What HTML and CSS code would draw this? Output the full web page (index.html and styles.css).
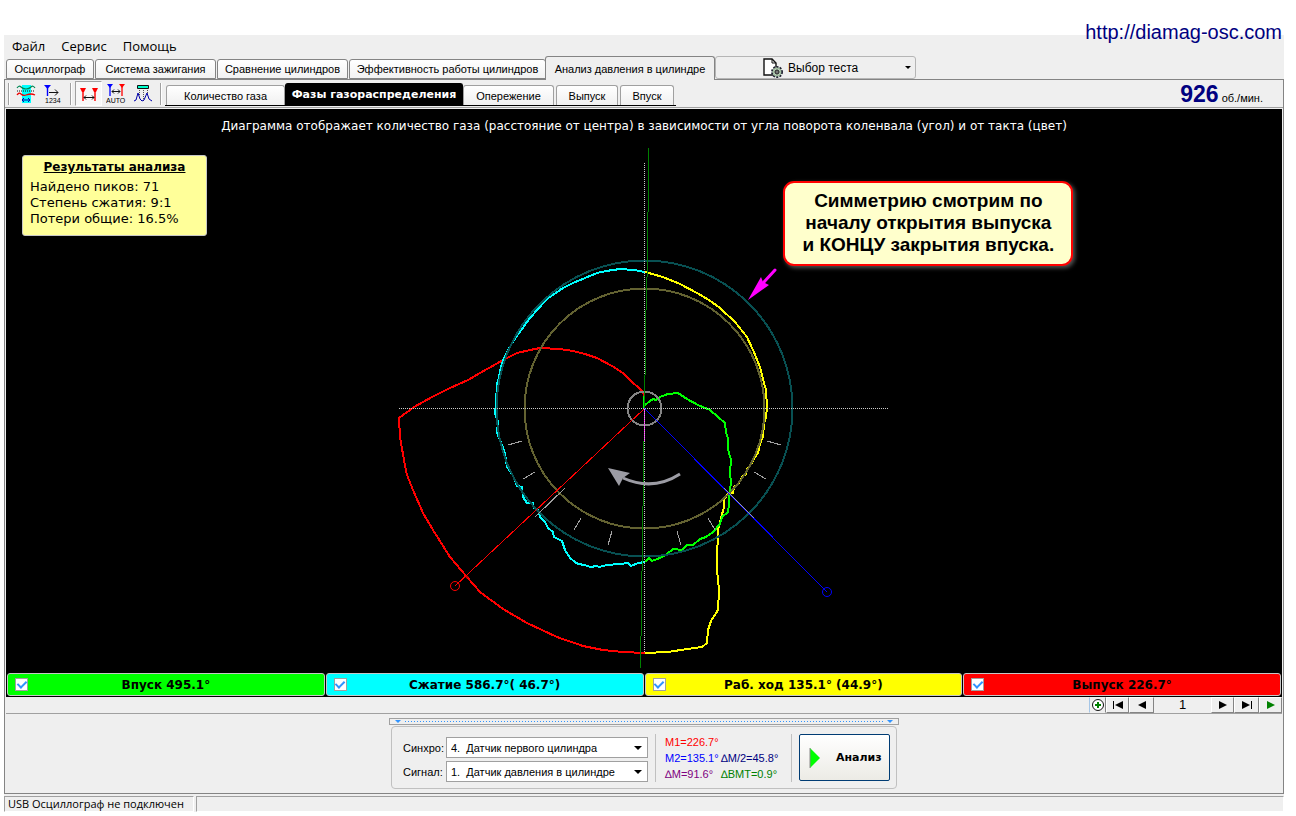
FILE: index.html
```html
<!DOCTYPE html>
<html lang="ru">
<head>
<meta charset="utf-8">
<title>Анализ давления в цилиндре</title>
<link rel="stylesheet" href="styles.css">
</head>
<body>
<div class="app">
  <header class="top">
    <nav class="menu">
      <button>Файл</button><button>Сервис</button><button>Помощь</button>
    </nav>
    <a class="site" href="http://diamag-osc.com">http://diamag-osc.com</a>
  </header>

  <div class="tabs" role="tablist">
    <button class="tab w1" role="tab">Осциллограф</button>
    <button class="tab w2" role="tab">Система зажигания</button>
    <button class="tab w3" role="tab">Сравнение цилиндров</button>
    <button class="tab w4" role="tab">Эффективность работы цилиндров</button>
    <button class="tab w5 current" role="tab" aria-selected="true">Анализ давления в цилиндре</button>
    <button class="test-pick">
      <svg width="20" height="20" viewBox="0 0 20 20"><path d="M1 1h8l4 4v12H1z" fill="#fff" stroke="#111" stroke-width="1.4"/><path d="M9 1v4h4" fill="none" stroke="#111"/><circle cx="14" cy="14" r="5" fill="#b8ceb8" stroke="#223" stroke-width="2" stroke-dasharray="2 1.2"/><circle cx="14" cy="14" r="4" fill="#b8ceb8" stroke="#9ab89a"/><circle cx="14" cy="14" r="2" fill="#fff" stroke="#111"/><path d="M14 12v4M12 14h4" stroke="#111" stroke-width=".7"/></svg>
      <span>Выбор теста</span><i class="caret small"></i>
    </button>
  </div>

  <main class="panel">
    <div class="toolbar">
      <i class="sep"></i>
      <button class="tool" aria-label="Сигналы"><svg width="20" height="20" viewBox="0 0 20 20"><path d="M6 1h9v18H6z" fill="#0ff"/><path d="M1 4q2-3 4-1t5 2 5-2 4 1" fill="none" stroke="#085" stroke-width="1.2"/><path d="M1 7h18" stroke="#111" stroke-dasharray="1 1"/><path d="M1 11q2-3 4-1t5 1 5-1 4 1" fill="none" stroke="#e00" stroke-width="1.3"/><path d="M6 16h8M8 14l-2 2 2 2M12 14l2 2-2 2" fill="none" stroke="#00a"/></svg></button>
      <button class="tool" aria-label="Нумерация"><svg width="20" height="20" viewBox="0 0 20 20"><path d="M1 1h7L4.500 5z" fill="#00f"/><path d="M4.500 3v9" stroke="#00f" stroke-width="1.4"/><path d="M6 8.500h9M12 5.500l3 3-3 3" fill="none" stroke="#111"/><text x="2" y="19" class="tiny">1234</text></svg></button>
      <i class="sep wide"></i>
      <button class="tool pressed" aria-label="Маркеры"><svg width="20" height="20" viewBox="0 0 20 20"><path d="M1 4h6L5 8H3zM13 4h6l-2 4h-2z" fill="#f00"/><path d="M4 6v11M16 6v11" stroke="#f00" stroke-width="1.4"/><path d="M5 13.500h10M7 11.500l-2 2 2 2M13 11.500l2 2-2 2" fill="none" stroke="#111"/></svg></button>
      <button class="tool" aria-label="Авто"><svg width="20" height="20" viewBox="0 0 20 20"><path d="M1 0h6L4 4z" fill="#00f"/><path d="M13 0h6l-3 4z" fill="#f00"/><path d="M4 2v10" stroke="#00f" stroke-width="1.3"/><path d="M16 2v10" stroke="#f00" stroke-width="1.3"/><path d="M6 7.500h8M8 5.500l-2 2 2 2M12 5.500l2 2-2 2" fill="none" stroke="#111"/><text x="0" y="19" class="tiny">AUTO</text></svg></button>
      <button class="tool" aria-label="Импульсы"><svg width="20" height="20" viewBox="0 0 20 20"><path d="M4.500 1.500h11v3h-11z" fill="#0fc" stroke="#111"/><path d="M6.500 6v6M10.500 6v11M14.500 6v6" stroke="#555" stroke-dasharray="1 1"/><path d="M1 17l2-1 2-7 2 6 2 2 2-1 3-7 2 6 3 2" fill="none" stroke="#00a"/></svg></button>
      <i class="sep wide"></i>
      <div class="subtabs" role="tablist">
        <button class="sub s1" role="tab">Количество газа</button>
        <button class="sub s2 on" role="tab" aria-selected="true">Фазы газораспределения</button>
        <button class="sub s3" role="tab">Опережение</button>
        <button class="sub s4" role="tab">Выпуск</button>
        <button class="sub s5" role="tab">Впуск</button>
      </div>
      <p class="rpm"><b>926</b> <span>об./мин.</span></p>
    </div>

    <section class="plot">
      <h1 class="caption">Диаграмма отображает количество газа (расстояние от центра) в зависимости от угла поворота коленвала (угол) и от такта (цвет)</h1>
      <svg class="diagram" viewBox="6 109 1276 564" aria-hidden="true">
        <g fill="none" stroke-width="2" stroke-linejoin="round" shape-rendering="crispEdges">
          <path stroke="#f00" d="M644 405V394L641 390 630 380 623 373 612 366 597 358 585 354 573 351 560 349 540 348 530 350 517 353 505 359 480 373 468 380 450 388 432 397 414 407 399 418 400 437 404 460 407 475 413 490 423 513 433 530 450 557 467 577 480 592 503 609 527 623 557 637 583 646 603 650 623 652 645 653"/>
          <path stroke="#ff0" d="M645 653L668 652 687 649 702 647 707 643 708 630 711 621 718 610 719 590 717 570 717 550 718 540 718 530 721 518 724 507 724 500 728 493 733 493 734 487 739 483 742 477 746 474 747 469 752 463 755 457 758 453 759 448 761 441 763 437 764 423 766 417 767 407 766 390 764 383 760 367 753 350 747 337 735 322 720 308 709 300 697 293 680 284 663 277 645 272"/>
          <path stroke="#0ff" d="M645 272L634 270 620 269 606 271 597 273 585 278 573 283 563 288 547 299 530 318 519 333 512 343 503 360 500 371 499 378 497 383 496 403 495 413 498 422 497 433 502 445 505 453 507 467 512 474 515 480 517 486 522 487 523 497 527 503 533 503 534 508 538 510 540 517 545 522 548 528 553 532 554 537 562 541 565 550 570 558 575 562 578 564 585 565 590 567 597 566 599 567 607 565 620 564 628 563 631 566 638 563 645 562"/>
          <path stroke="#0f0" d="M644 408V396M645 405L650 401 653 399 656 400 660 397 668 394 678 393 687 399 698 405 710 410 718 417 725 423 726 433 728 438 728 448 729 453 731 460 730 473 731 483 729 495 729 505 728 512 722 517 720 524 713 532 706 537 700 539 693 545 687 545 682 550 673 549 667 554 660 558 652 561 649 558 645 562"/>
          <circle cx="644.5" cy="408.5" r="148" stroke="#085052"/><circle cx="644.5" cy="408.5" r="120" stroke="#636231"/><circle cx="644.5" cy="408.5" r="17" stroke="#848484"/>
        </g>
        <g stroke="#ccc" shape-rendering="crispEdges" stroke-dasharray="1 1"><path d="M399 408.5H889M644.5 163V653"/></g>
        <g shape-rendering="crispEdges" fill="none">
          <path d="M648.5 148V212M647.5 212V277M646.5 277V310M645.5 310V375M644.5 375V408M643.5 441V506M642.5 506V571M641.5 571V636M640.5 636V668" stroke="#008000"/>
          <path d="M644.5 410V441" stroke="#f0f" stroke-dasharray="1 1"/>
          <path d="M644 409L455 586" stroke="#f00"/><path d="M644 408L827 592" stroke="#00f"/>
          <path stroke="#a0a0a0" d="M508 445L522 441M523 479L535 472M535 517L565 488M574 530L581 518M608 545L612 531M767 441L781 445M754 472L766 479M708 518L715 530M677 531L681 545M724 488L754 518"/>
        </g>
        <circle cx="455" cy="586" r="4.5" fill="none" stroke="#f00"/><circle cx="827" cy="592" r="4.5" fill="none" stroke="#00f"/><circle cx="467" cy="577" r="1" fill="#000" stroke="#f00"/>
        <path d="M680 474C663 485 643 487 623 478" fill="none" stroke="#9c9ca4" stroke-width="3"/><path d="M608 468L630 473 623 478 619 486Z" fill="#9c9ca4"/>
        <path d="M775 270L764 282" stroke="#f0f" stroke-width="3" stroke-linecap="round"/><path d="M748 300L761 277 763 282 769 285Z" fill="#f0f"/>
      </svg>
      <aside class="results">
        <h2>Результаты анализа</h2>
        <p>Найдено пиков: 71</p><p>Степень сжатия: 9:1</p><p>Потери общие: 16.5%</p>
      </aside>
      <div class="callout">Симметрию смотрим по<br>началу открытия выпуска<br>и КОНЦУ закрытия впуска.</div>
    </section>

    <div class="phases">
      <label class="phase intake"><input type="checkbox" checked><span>Впуск 495.1°</span></label>
      <label class="phase compression"><input type="checkbox" checked><span>Сжатие 586.7°( 46.7°)</span></label>
      <label class="phase power"><input type="checkbox" checked><span>Раб. ход 135.1° (44.9°)</span></label>
      <label class="phase exhaust"><input type="checkbox" checked><span>Выпуск 226.7°</span></label>
    </div>

    <div class="pager">
      <button class="plus" aria-label="Добавить"><svg width="14" height="14" viewBox="0 0 14 14"><circle cx="7" cy="7" r="5.5" fill="#fff" stroke="#111"/><path d="M7 4v6M4 7h6" stroke="#008000" stroke-width="2"/></svg></button>
      <button aria-label="В начало"><svg width="12" height="8" viewBox="0 0 12 8"><path d="M1 0h1v8H1zM11 0v8L3 4z"/></svg></button>
      <button class="mid" aria-label="Назад"><svg width="12" height="8" viewBox="0 0 12 8"><path d="M10 0v8L2 4z"/></svg></button>
      <output>1</output>
      <button aria-label="Вперёд"><svg width="12" height="8" viewBox="0 0 12 8"><path d="M2 0v8l8-4z"/></svg></button>
      <button class="mid" aria-label="В конец"><svg width="12" height="8" viewBox="0 0 12 8"><path d="M1 0v8l8-4zM10 0h1v8h-1z"/></svg></button>
      <button aria-label="Пуск"><svg width="12" height="8" viewBox="0 0 12 8"><path fill="#008000" d="M2 0v8l8-4z"/></svg></button>
    </div>

    <footer class="controls">
      <button class="collapse" aria-label="Свернуть"><i></i><span></span><i></i></button>
      <div class="box">
        <div class="fields">
          <label for="sync">Синхро:</label>
          <span class="pick"><select id="sync"><option>4.&nbsp; Датчик первого цилиндра</option></select><i class="caret"></i></span>
          <label for="signal">Сигнал:</label>
          <span class="pick"><select id="signal"><option>1.&nbsp; Датчик давления в цилиндре</option></select><i class="caret"></i></span>
        </div>
        <div class="marks">
          <span class="m1">M1=226.7°</span><span></span>
          <span class="m2">M2=135.1°</span><span class="half">∆M/2=45.8°</span>
          <span class="dm">∆M=91.6°</span><span class="bmt">∆ВМТ=0.9°</span>
        </div>
        <button class="run"><svg width="12" height="20" viewBox="0 0 12 20"><path d="M1 0v20l10-10z" fill="#0f0"/><path d="M1 0v20" stroke="#888"/></svg><span>Анализ</span></button>
      </div>
    </footer>
  </main>

  <div class="status"><span>USB Осциллограф не подключен</span><span></span></div>
</div>
</body>
</html>
```
FILE: styles.css
```css
* { box-sizing: border-box; }
body { margin: 0; background: #fff; color: #000; font: 11px/16px "Liberation Sans", sans-serif; }
button { margin: 0; padding: 0; border: 0; background: none; font: inherit; color: inherit; }
p, h1, h2 { margin: 0; font: inherit; }
.app { margin: 35px 12px 0 4px; background: #efefef; display: flex; flex-direction: column; }

.top { display: flex; justify-content: space-between; height: 21px; padding: 0 2px 0 8px; }
.menu { display: flex; gap: 16px; font: 13px/20px "Open Sans", sans-serif; }
.site { margin-top: -14px; font-size: 20px; line-height: 22px; color: #000080; text-decoration: none; white-space: nowrap; }

.tabs { display: flex; align-items: flex-end; gap: 1px; height: 24px; padding-left: 2px; }
.tab { height: 20px; border: 1px solid #848484; border-radius: 3px 3px 0 0; background: linear-gradient(#fff, #f2f2f2); font-size: 11px; line-height: 18px; white-space: nowrap; margin-bottom: 1px; }
.w1 { width: 88px; } .w2 { width: 121px; } .w3 { width: 131px; } .w4 { width: 197px; }
.w5 { width: 170px; }
.tab.current { margin: 0 0 0 -2px; height: 24px; border-bottom: 0; background: #efefef; position: relative; z-index: 1; }
.test-pick { width: 201px; height: 23px; margin: 0 0 1px -1px; padding: 0 4px 0 47px; display: flex; align-items: center; gap: 5px; border: 1px solid #b5b5b5; border-radius: 3px; font-size: 12px; white-space: nowrap; }
.caret { border: 5px solid transparent; border-top-color: #000; border-bottom: 0; margin-left: auto; }
.caret.small { border-width: 3px 3px 0; }

.panel { border: 1px solid #848484; margin-top: -1px; }
.toolbar { display: flex; align-items: center; height: 28px; padding: 0 20px 0 3px; border-bottom: 1px solid #a0a0a0; }
.sep { width: 2px; height: 22px; border-left: 1px solid #a0a0a0; border-right: 1px solid #fff; margin-right: 2px; }
.sep.wide { margin: 0 3px 0 4px; }
.tool { width: 27px; height: 25px; display: grid; place-items: center; }
.tool.pressed { background: #f8f8f8; border: 1px solid; border-color: #a0a0a0 #fff #fff #a0a0a0; }
.tiny { font: 7px "Liberation Sans", sans-serif; }
.subtabs { display: flex; align-items: flex-end; gap: 2px; align-self: flex-end; height: 24px; margin: 0 0 1px; padding: 0 2px 0 1px; border-bottom: 1px solid #000; }
.sub { height: 20px; border: 1px solid #a0a0a0; border-bottom: 0; border-radius: 3px 3px 0 0; background: linear-gradient(#fff, #f0f0f0); white-space: nowrap; }
.sub.on { height: 22px; margin: 0 -2px; background: #000; color: #fff; border-color: #000; font: bold 11px/18px "DejaVu Sans", sans-serif; }
.s1 { width: 119px; } .s2 { width: 178px; } .s3 { width: 91px; } .s4 { width: 62px; } .s5 { width: 54px; }
.rpm { margin-left: auto; display: flex; align-items: baseline; gap: 3px; font-size: 11px; }
.rpm b { font-size: 23px; line-height: 26px; color: #000080; }

.plot { position: relative; background: #000; margin: 1px 1px 0; }
.diagram { display: block; width: 100%; height: 564px; }
.caption { position: absolute; top: 8px; left: 0; right: 0; text-align: center; color: #fff; font: 12px/18px "DejaVu Sans", sans-serif; }
.results { position: absolute; left: 16px; top: 46px; width: 185px; height: 81px; padding: 3px 7px; background: #ff9; border: 1px solid #c6c6c6; border-radius: 3px; font: 13px/16px "DejaVu Sans", sans-serif; white-space: nowrap; }
.results h2 { font-weight: bold; font-size: 12px; text-align: center; text-decoration: underline; margin-bottom: 4px; }
.callout { position: absolute; left: 61%; top: 72px; width: 290px; margin-left: -1px; padding: 7px 0 8px; border: 2px solid #f00; border-radius: 11px; background: #ffc; box-shadow: 2px 2px 4px #555; text-align: center; font-weight: bold; font-size: 19px; line-height: 22px; white-space: nowrap; }

.phases { display: grid; grid-template-columns: repeat(4, 1fr); gap: 1px; background: #000; margin: 0 1px; padding: 0 1px 1px; }
.phase { display: grid; grid-template-columns: 13px 1fr 13px; align-items: center; height: 23px; padding: 0 7px; border: 1px solid #c6c6c6; border-radius: 3px; font: bold 12px/20px "DejaVu Sans", sans-serif; text-align: center; }
.phase input { appearance: none; margin: 0; width: 13px; height: 13px; border: 1px solid #a0a0a0; background: #fff; display: grid; place-items: center; }
.phase input:checked::before { content: ""; width: 4px; height: 7px; margin-bottom: 2px; border: solid #3194ff; border-width: 0 2px 2px 0; transform: rotate(45deg); }
.intake { background: #0f0; } .compression { background: #0ff; } .power { background: #ff0; } .exhaust { background: #f00; }

.pager { display: flex; justify-content: flex-end; height: 17px; margin: 0 1px; border-bottom: 1px solid #a0a0a0; }
.pager button { width: 23px; display: grid; place-items: center; border: 1px solid; border-color: #fff #848484 #848484 #fff; }
.pager .mid { width: 25px; }
.pager .plus { width: 17px; border-color: #efefef #848484 #efefef #a5c6e7; }
.pager output { width: 57px; text-align: center; font-size: 13px; }

.controls { display: flex; flex-direction: column; align-items: center; padding: 4px 0; }
.collapse { display: flex; align-items: center; gap: 4px; width: 510px; height: 7px; padding: 0 5px; border: 1px solid #a0a0a0; }
.collapse i { border: 3px solid transparent; border-top-color: #3194ff; border-bottom: 0; }
.collapse span { flex: 1; height: 1px; background: repeating-linear-gradient(90deg, #3194ff 0 1px, transparent 1px 3px); }
.box { display: flex; align-items: center; width: 506px; height: 63px; margin-top: 1px; padding: 0 6px 0 11px; border: 1px solid #c0c0c0; border-radius: 4px; }
.fields { display: grid; grid-template-columns: 43px 202px; gap: 3px 0; align-items: center; margin-top: 4px; }
.pick { display: grid; align-items: center; }
.pick select, .pick .caret { grid-area: 1 / 1; }
.pick .caret { justify-self: end; margin-right: 6px; border-width: 4px 4px 0; pointer-events: none; }
.pick select { appearance: none; width: 100%; height: 21px; padding: 0 4px; border: 1px solid #a0a0a0; border-radius: 0; background: #fff; color: #000; font: 11px/18px "Liberation Sans", sans-serif; }
.marks { display: grid; grid-template-columns: 56px 1fr; line-height: 16px; width: 137px; margin-left: 7px; padding-left: 9px; border: solid #c0c0c0; border-width: 0 1px; white-space: nowrap; }
.m1 { color: #f00; } .m2 { color: #00f; } .dm { color: #800080; } .half { color: #000080; } .bmt { color: #008000; }
.run { margin-left: 7px; width: 91px; height: 47px; display: flex; align-items: center; gap: 15px; padding-left: 9px; border: 1px solid #003c74; border-radius: 2px; background: linear-gradient(#fff, #ecebe5); font: bold 11px/16px "DejaVu Sans", sans-serif; }

.status { display: grid; grid-template-columns: 190px 1fr; gap: 2px; margin-top: 2px; font: 11px/14px "Open Sans", sans-serif; }
.status span { height: 16px; padding-left: 3px; border: 1px solid; border-color: #a0a0a0 #fff #fff #a0a0a0; white-space: nowrap; }
```
